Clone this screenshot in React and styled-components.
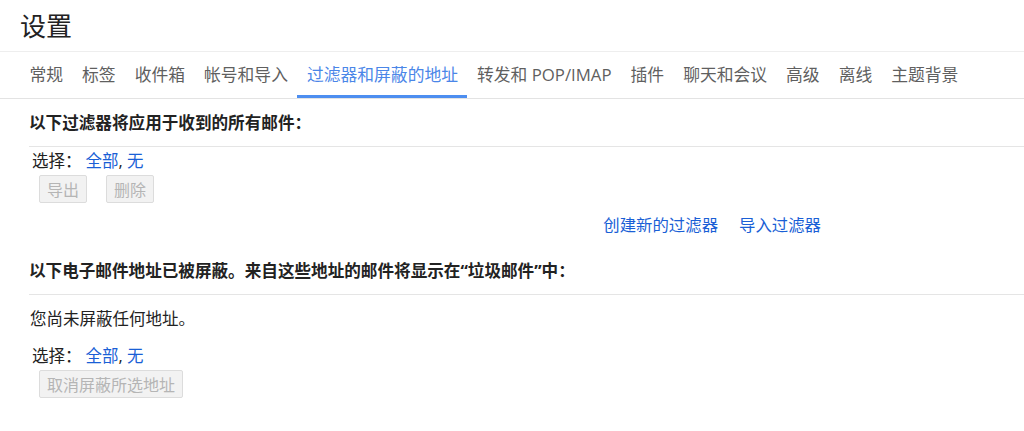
import React from "react";
import styled, { createGlobalStyle } from "styled-components";

const GlobalStyle = createGlobalStyle`
  body {
    margin: 0;
    background: #fff;
    font-family: "Open Sans", "Noto Sans CJK SC", sans-serif;
    color: #222;
  }
`;

const Page = styled.div`
  width: 1024px;
  height: 431px;
  overflow: hidden;
  background: #fff;
`;

const Header = styled.div`
  height: 51px;
  line-height: 50px;
  padding-left: 20px;
  font-size: 26px;
  color: #222;
  border-bottom: 1px solid #eeeeee;
  font-family: "Noto Sans CJK SC", sans-serif;
`;

const Tabs = styled.div`
  display: flex;
  height: 46px;
  padding-left: 20px;
  border-bottom: 1px solid #e3e3e3;
`;

const Tab = styled.div`
  box-sizing: border-box;
  height: 46px;
  padding: 3px 9.5px 0;
  line-height: 40px;
  font-size: 16.8px;
  color: ${({ active }) => (active ? "#4a86e8" : "#5f5f5f")};
  border-bottom: 3px solid ${({ active }) => (active ? "#4d8ef0" : "transparent")};
  white-space: nowrap;
`;

const Body = styled.div`
  padding-left: 29px;
`;

const SectionTitle = styled.div`
  height: 47px;
  line-height: 47px;
  font-size: 16.6px;
  font-weight: bold;
  color: #222;
  border-bottom: 1px solid #e5e5e5;
`;

const Note = styled.div`
  height: 47px;
  line-height: 47px;
  font-size: 16.5px;
  padding-left: 1px;
`;

const SelectRow = styled.div`
  height: 28px;
  line-height: 28px;
  font-size: 16.5px;
  padding-left: 3px;
  color: #222;
`;

const Label = styled.span`
  margin-right: 4px;
`;

const Link = styled.a`
  color: #1a5fd6;
  text-decoration: none;
  cursor: pointer;
`;

const ButtonRow = styled.div`
  display: flex;
  gap: 19px;
  padding-left: 10px;
`;

const Button = styled.button`
  height: 28px;
  padding: 0 7px;
  font-size: 16px;
  font-family: "Noto Sans CJK SC", sans-serif;
  line-height: 26px;
  color: #b5b5b5;
  background: #f2f2f2;
  border: 1px solid #dcdcdc;
  border-radius: 2px;
`;

const Actions = styled.div`
  display: flex;
  justify-content: flex-end;
  gap: 21px;
  height: 44px;
  line-height: 44px;
  padding-right: 203px;
  font-size: 16.4px;
`;

const tabs = [
  "常规",
  "标签",
  "收件箱",
  "帐号和导入",
  "过滤器和屏蔽的地址",
  "转发和 POP/IMAP",
  "插件",
  "聊天和会议",
  "高级",
  "离线",
  "主题背景",
];

export default function App() {
  return (
    <Page>
      <GlobalStyle />
      <Header>设置</Header>
      <Tabs>
        {tabs.map((t) => (
          <Tab key={t} active={t === "过滤器和屏蔽的地址"}>{t}</Tab>
        ))}
      </Tabs>
      <Body>
        <SectionTitle>以下过滤器将应用于收到的所有邮件：</SectionTitle>
        <SelectRow>
          <Label>选择：</Label>
          <Link>全部</Link>, <Link>无</Link>
        </SelectRow>
        <ButtonRow>
          <Button disabled>导出</Button>
          <Button disabled>删除</Button>
        </ButtonRow>
      </Body>
      <Actions>
        <Link>创建新的过滤器</Link>
        <Link>导入过滤器</Link>
      </Actions>
      <Body>
        <SectionTitle>以下电子邮件地址已被屏蔽。来自这些地址的邮件将显示在“垃圾邮件”中：</SectionTitle>
        <Note>您尚未屏蔽任何地址。</Note>
        <SelectRow>
          <Label>选择：</Label>
          <Link>全部</Link>, <Link>无</Link>
        </SelectRow>
        <ButtonRow>
          <Button disabled>取消屏蔽所选地址</Button>
        </ButtonRow>
      </Body>
    </Page>
  );
}
